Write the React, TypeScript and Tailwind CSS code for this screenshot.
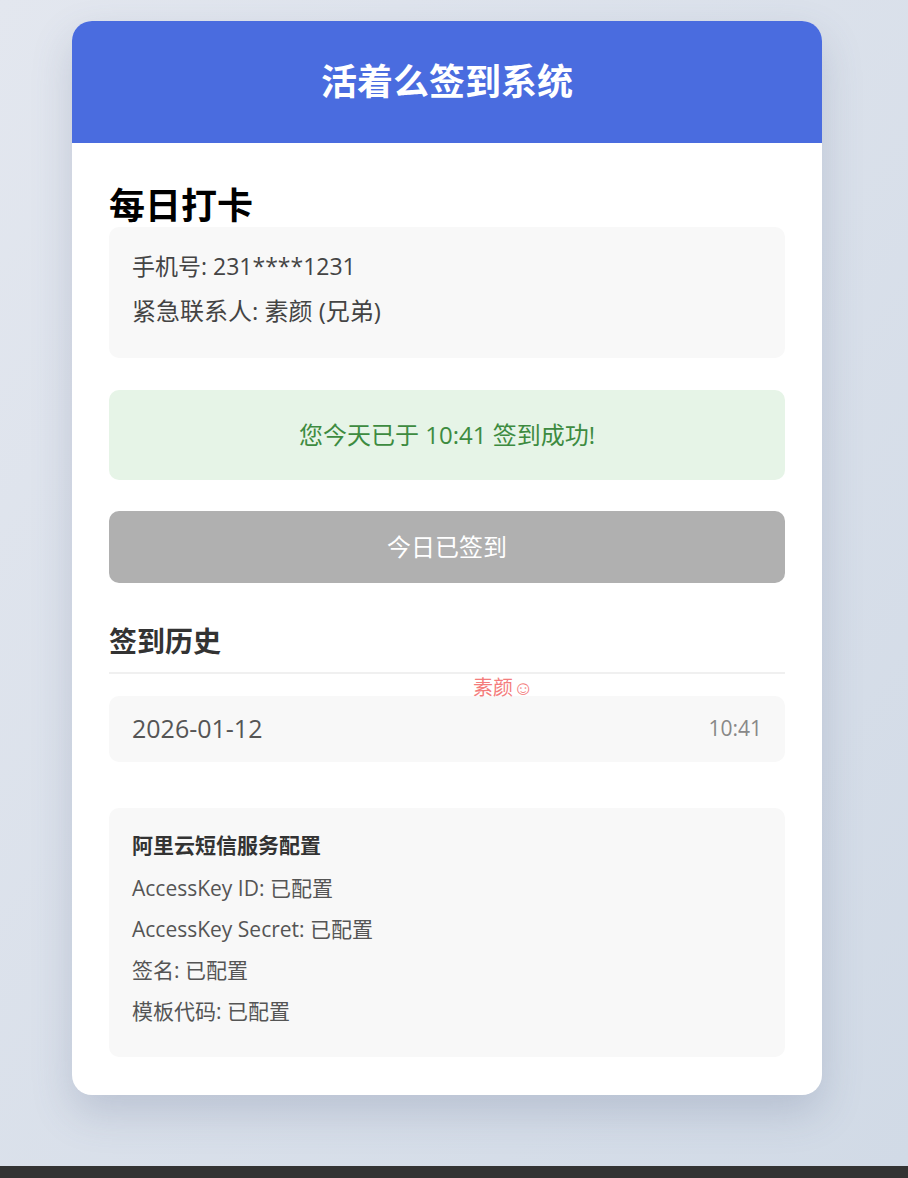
import React from "react";

export default function App() {
  const font = { fontFamily: '"Open Sans", "Noto Sans CJK SC", sans-serif' };
  return (
    <div className="flex h-[1178px] w-full flex-col" style={font}>
      <div className="flex flex-1 justify-start bg-gradient-to-br from-[#e3e7ef] to-[#d1dae6] pl-[72px] pt-[21px]">
        <div className="h-[1074px] w-[750px] overflow-hidden rounded-[20px] bg-white shadow-[0_18px_40px_rgba(80,95,130,0.22)]">
          <div className="flex h-[122px] items-center justify-center bg-[#4a6cdf]">
            <h1 className="text-[36px] font-bold leading-none text-white">活着么签到系统</h1>
          </div>
          <div className="flex flex-col px-[37px] pb-[38px]">
            <h2 className="mt-[45px] text-[36px] font-bold leading-[36px] text-black">每日打卡</h2>
            <div className="mt-[3px] flex h-[131px] flex-col gap-[13px] rounded-[10px] bg-[#f8f8f8] px-[23px] pt-[23px] text-[23px] text-[#444]">
              <div className="h-[32px] leading-[32px]">手机号: 231****1231</div>
              <div className="h-[32px] text-[24px] leading-[32px]">紧急联系人: 素颜 (兄弟)</div>
            </div>
            <div className="mt-[32px] flex h-[90px] items-center justify-center rounded-[10px] bg-[#e6f4e7] text-[24px] text-[#3d8b40]">
              您今天已于 10:41 签到成功!
            </div>
            <button className="mt-[31px] flex h-[72px] items-center justify-center rounded-[10px] bg-[#b0b0b0] text-[24px] text-white">
              今日已签到
            </button>
            <h3 className="mt-[44px] text-[28px] font-bold leading-[28px] text-[#333]">签到历史</h3>
            <div className="relative mt-[17px] h-[2px] bg-[#f0f0f0]">
              <span className="absolute left-[364px] top-[5px] text-[20px] leading-[22px] text-[#f47c7c]">素颜☺</span>
            </div>
            <div className="mt-[22px] flex h-[66px] items-center justify-between rounded-[10px] bg-[#f8f8f8] px-[23px]">
              <span className="text-[25px] text-[#555]">2026-01-12</span>
              <span className="text-[21px] text-[#888]">10:41</span>
            </div>
            <div className="mt-[46px] flex h-[249px] flex-col rounded-[10px] bg-[#f8f8f8] px-[23px] pt-[23px] text-[#555]">
              <div className="h-[28px] text-[21px] font-bold leading-[28px] text-[#333]">阿里云短信服务配置</div>
              <div className="mt-[15px] flex flex-col gap-[13px] text-[21px]">
                <div className="h-[28px] leading-[28px]">AccessKey ID: 已配置</div>
                <div className="h-[28px] leading-[28px]">AccessKey Secret: 已配置</div>
                <div className="h-[28px] leading-[28px]">签名: 已配置</div>
                <div className="h-[28px] leading-[28px]">模板代码: 已配置</div>
              </div>
            </div>
          </div>
        </div>
      </div>
      <div className="h-[12px] bg-[#333]" />
    </div>
  );
}
